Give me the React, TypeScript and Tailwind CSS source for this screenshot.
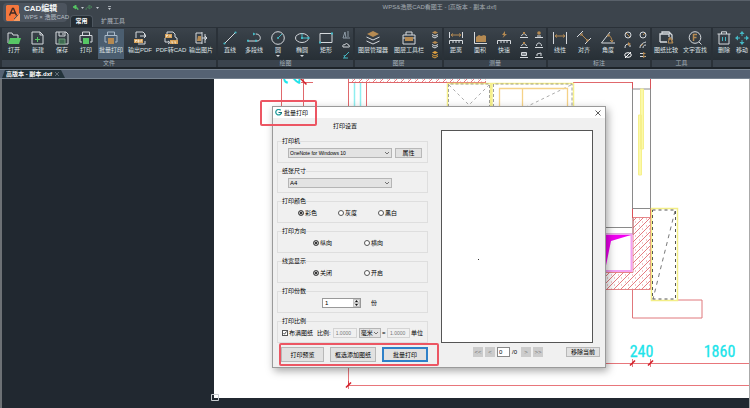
import { useState } from "react";
import type { ReactNode } from "react";
import clsx from "clsx";

const FONT = "font-['Liberation_Sans','Noto_Sans_CJK_SC',sans-serif]";

/* ---------- ribbon icons ---------- */

const W = "#d5d9dd";
const G = "#57c765";
const O = "#b58a52";
const C = "#45b8c4";

const ICONS: Record<string, ReactNode> = {
  open: (
    <>
      <path d="M2 12V2h4l1 2h5v3" stroke={W} />
      <path d="M4 7h11l-2 6H2z" fill={G} />
    </>
  ),
  create: (
    <>
      <path d="M2 1h8l3 3v9H2zM10 1v3h3" stroke={W} />
      <path d="M7.5 6v5M5 8.5h5" stroke={G} />
    </>
  ),
  save: (
    <>
      <path d="M2 1h10l2 2v10H2zM5 1v4h6V1M9 2v2" stroke={W} />
      <path d="M5 8h6v5H5z" fill="#3e6b51" stroke="#6f9a7c" />
    </>
  ),
  print: (
    <>
      <path d="M4.5 4V1h7v3M4 11H2V4.5h12V11h-2" stroke={W} />
      <path d="M5 7h6v6H5z" fill={G} />
    </>
  ),
  batch: (
    <>
      <path d="M4.5 4V1h7v3M4 11H2V4.5h12V11h-2" stroke="#a9b9c8" />
      <path d="M5 7h6v6H5z" fill={O} />
    </>
  ),
  pdf: (
    <>
      <path d="M4 7V1h7l2 2v3M13 10v3H6M8 5h6M12 3l2 2-2 2" stroke={W} />
      <rect x="2" y="8" width="9" height="4" fill="#d8a35a" />
      <path d="M3.5 11V9h1v1M6 9v2h1V9zM9 11V9h1" stroke="#fff" strokeWidth=".6" />
    </>
  ),
  pdfcad: (
    <>
      <path d="M4 3V1h6l2 2v3M2 7v4h4M5 10l2 1.5L5 13M12 6l2 1v3" stroke={W} />
      <rect x="2" y="3" width="7" height="4" fill="#d8a35a" />
      <rect x="7" y="9" width="8" height="4" fill="#d8a35a" />
      <path d="M3.5 6V4h1v1M7 4v2M9 10v2h1M12 10v2h1" stroke="#fff" strokeWidth=".6" />
    </>
  ),
  image: (
    <>
      <path d="M9 2H3v10h6M9 1v12M12 3v9M9 7h5M12 5l2 2-2 2" stroke={W} />
      <path d="M5 5h3v5H4z" fill={O} />
    </>
  ),
  line: (
    <>
      <path d="M3 12 13 2" stroke={W} />
      <circle cx="2.5" cy="12.5" r="1.1" fill={C} />
      <circle cx="13.5" cy="1.5" r="1.1" fill={C} />
    </>
  ),
  polyline: (
    <>
      <path d="M2 10h9c5 0 4-7-1-7" stroke={W} />
      <path d="M7 1.5v3L10 3zM1 8.8h2v2H1zM9 8.8h2v2H9z" fill={C} />
    </>
  ),
  circle: (
    <>
      <circle cx="8" cy="7" r="6.3" stroke={W} />
      <path d="m8 7 4-4" stroke={C} />
      <circle cx="8" cy="7" r="1" fill={C} />
    </>
  ),
  ellipse: (
    <>
      <ellipse cx="8" cy="7" rx="6.5" ry="4.5" stroke={W} />
      <path d="M8 2.5V7h6" stroke={C} />
      <path d="M7 6h2v2H7zM13.5 6h2v2h-2z" fill={C} />
    </>
  ),
  rect: (
    <>
      <path d="M2 2.5h12v9H2z" stroke={W} />
      <path d="M1 10.5h2v2H1zM13 1.5h2v2h-2z" fill={C} />
    </>
  ),
  layers: (
    <>
      <path d="M8 0l6 3-6 3-6-3z" fill={O} />
      <path d="m1.5 6 6.5 3 6.5-3M1.5 10 8 13l6.5-3" stroke={W} />
    </>
  ),
  toolbox: (
    <>
      <path d="M5 4V1h6v3M2 4h12v9H2zM2 7h2m8 0h2" stroke={W} />
      <path d="M4 6h8v4H4z" fill={O} />
    </>
  ),
  distance: (
    <>
      <path d="M1.5 1v6M14.5 1v6M1.5 13V9.5h13V13M5 10v2M8 10v2M11 10v2" stroke={W} />
      <path d="M3 4h10M5 2.5 3 4l2 1.5M11 2.5 13 4l-2 1.5" stroke={O} />
    </>
  ),
  area: (
    <>
      <path d="M2.5 1v11.5H15" stroke={W} />
      <path d="M4 11V6l3-2 2 1 3-1 2 1v6z" fill={O} />
    </>
  ),
  quick: (
    <>
      <path d="M1.5 13V9.5h13V13M5 10v2M8 10v2M11 10v2" stroke={W} />
      <path d="M9 0 6 4h2L6.5 7 11 3H9z" fill={O} />
    </>
  ),
  linear: (
    <>
      <path d="M1.5 1v12M14.5 1v12" stroke={W} />
      <path d="M3 5h10M5 3.5 3 5l2 1.5M11 3.5 13 5l-2 1.5" stroke={O} />
    </>
  ),
  aligned: (
    <>
      <path d="M1 6 7 0M9 13l6-6" stroke={W} />
      <path d="m5 3 7 7M5 5V3h2M10 10h2V8" stroke={O} />
    </>
  ),
  angle: (
    <>
      <path d="M15 12H1.5L10 1" stroke={W} />
      <path d="M8 4c3 1 4 4 4 7M10 4H8v2M10 9l2 2 1-2" stroke={O} />
    </>
  ),
  compare: (
    <>
      <path d="M2 11V3h9v3M4 3V1h7l3 3v5M2 11h7" stroke={W} strokeWidth="1.3" />
      <path d="M12 6l3 6h-5zM10 8h4v4" stroke={O} />
    </>
  ),
  find: (
    <>
      <circle cx="8" cy="6.5" r="5.8" stroke={W} />
      <path d="m12 11 2.5 2.5" stroke={W} />
      <path d="M6.5 10V3.5h3.5M6.5 6.5h3" stroke={O} strokeWidth="1.5" />
    </>
  ),
  trash: (
    <>
      <path d="M1.5 3h13M5.5 3V.8h5V3M3 3v10h10V3" stroke={W} />
      <path d="M6.5 6v4M9.5 6v4" stroke={C} />
    </>
  ),
  move: (
    <>
      <path d="M8 2v3M8 9v3M3 7h3M10 7h3" stroke={C} />
      <path d="M8 0l2.5 3h-5zM8 14l2.5-3h-5zM1 7l3-2.5v5zM15 7l-3-2.5v5z" fill={C} />
    </>
  ),
  /* small ones, 8x8 */
  sText: <path d="M1 7 3 1l1 6M5 1h2M5 3h2M5 5h2M1 7h7" stroke="#8d9aa5" />,
  sCloud: <path d="M1 6c-1-2 1-3 2-2 0-2 3-2 3 0 2 0 2 2 1 2z" stroke={W} />,
  sPick: <path d="M7 1 3 5M1 7h5M2 4l1 3" stroke={C} />,
  sLayer: (
    <>
      <path d="M4 0l3 1.5L4 3 1 1.5z" fill={O} />
      <path d="m1 3.5 3 1.5 3-1.5M1 5.5 4 7l3-2" stroke={W} />
    </>
  ),
  sLayerOn: (
    <>
      <path d="M4 0l3 1.5L4 3 1 1.5z" fill="#e0a13f" />
      <path d="m1 3.5 3 1.5 3-1.5M1 5.5 4 7l3-2" stroke="#e0a13f" />
    </>
  ),
  sArc: (
    <>
      <path d="M0 6.5h8M1.5 5c1-3 4-3 5 0" stroke={W} />
      <path d="M3 1h2v2H3z" fill={O} />
    </>
  ),
  sStamp: (
    <>
      <path d="M0 6.5h8M2 5h4" stroke={W} />
      <circle cx="4" cy="2" r="1.8" fill={O} />
    </>
  ),
  sTable: <path d="M1.5 1.5h5v3h-5zM0 6.5h8M2 3h4" stroke={W} />,
  sCurve: <path d="M0 6.5h8M1.5 5c0-4 5-4 5 0" stroke={W} />,
  sBox: <path d="M0 6.5h8M2 5V3l4-1v3" stroke={W} />,
  sDiameter: (
    <>
      <circle cx="4" cy="4" r="3" stroke={W} />
      <path d="m2 2 4 4" stroke={O} />
    </>
  ),
  sRadius: (
    <>
      <circle cx="4" cy="4" r="3" stroke={W} />
      <path d="m4 4 2-2" stroke={O} />
    </>
  ),
  sLeader: (
    <>
      <path d="M1 7c0-3 1-4 4-4M5 5h2" stroke={W} />
      <path d="M4 1l3 2-3 2z" fill={O} />
    </>
  ),
  sArcLen: (
    <>
      <path d="M1 7c0-3 2-5 6-6M4 7c0-2 1-3 3-3" stroke={W} />
      <path d="m2 5 2-2" stroke={O} />
    </>
  ),
  sSlash: (
    <>
      <ellipse cx="4" cy="4" rx="3.3" ry="2.3" stroke="#fff" />
      <path d="M1 7 7 1" stroke="#fff" />
    </>
  ),
  sSwap: (
    <>
      <path d="M1 2.5h4M1 5.5h6" stroke={W} />
      <path d="M4 1l3 1.5L4 4zM4 4l3 1.5L4 7z" fill={O} />
    </>
  ),
};

function Icon({ name }: { name: string }) {
  return (
    <svg viewBox="0 0 16 14" className="h-[14px] w-4 shrink-0" fill="none">
      {ICONS[name]}
    </svg>
  );
}

interface Tool {
  icon: string;
  label: string;
  width: string;
  active?: boolean;
  menu?: boolean;
}

interface Group {
  title: string;
  width: string;
  tools: Tool[];
  small?: string[][];
}

const GROUPS: Group[] = [
  {
    title: "文件",
    width: "w-[214px]",
    tools: [
      { icon: "open", label: "打开", width: "w-6" },
      { icon: "create", label: "新建", width: "w-6" },
      { icon: "save", label: "保存", width: "w-6" },
      { icon: "print", label: "打印", width: "w-6" },
      { icon: "batch", label: "批量打印", width: "w-[26px]", active: true },
      { icon: "pdf", label: "输出PDF", width: "w-8" },
      { icon: "pdfcad", label: "PDF转CAD", width: "w-[30px]" },
      { icon: "image", label: "输出图片", width: "w-[30px]" },
    ],
  },
  {
    title: "绘图",
    width: "w-[135px]",
    tools: [
      { icon: "line", label: "直线", width: "w-6" },
      { icon: "polyline", label: "多段线", width: "w-6" },
      { icon: "circle", label: "圆", width: "w-6", menu: true },
      { icon: "ellipse", label: "椭圆", width: "w-6", menu: true },
      { icon: "rect", label: "矩形", width: "w-6" },
    ],
    small: [["sText", "sCloud", "sPick"]],
  },
  {
    title: "图层",
    width: "w-[87px]",
    tools: [
      { icon: "layers", label: "图层管理器", width: "w-9" },
      { icon: "toolbox", label: "图层工具栏", width: "w-9" },
    ],
    small: [["sLayer", "sLayer", "sLayerOn"]],
  },
  {
    title: "测量",
    width: "w-[102px]",
    tools: [
      { icon: "distance", label: "距离", width: "w-6" },
      { icon: "area", label: "面积", width: "w-6" },
      { icon: "quick", label: "快速", width: "w-6" },
    ],
    small: [
      ["sArc", "sArc", "sTable"],
      ["sStamp", "sCurve", "sBox"],
    ],
  },
  {
    title: "标注",
    width: "w-[102px]",
    tools: [
      { icon: "linear", label: "线性", width: "w-6" },
      { icon: "aligned", label: "对齐", width: "w-6" },
      { icon: "angle", label: "角度", width: "w-6" },
    ],
    small: [
      ["sDiameter", "sLeader", "sSlash"],
      ["sRadius", "sArcLen", "sSwap"],
    ],
  },
  {
    title: "工具",
    width: "w-[59px]",
    tools: [
      { icon: "compare", label: "图纸比较", width: "w-7" },
      { icon: "find", label: "文字查找", width: "w-[30px]" },
    ],
  },
  {
    title: "",
    width: "min-w-[37px] flex-1",
    tools: [
      { icon: "trash", label: "删除", width: "w-[22px]" },
      { icon: "move", label: "移动", width: "w-[14px]" },
    ],
  },
];

function RibbonGroup({ title, width, tools, small = [] }: Group) {
  return (
    <section className={clsx("flex shrink-0 flex-col overflow-hidden bg-linear-to-b from-[#3b434b] to-[#232b31]", width)}>
      <div className="flex h-8 pt-px">
        {tools.map((tool) => (
          <button
            key={tool.label}
            type="button"
            className={clsx(
              "flex h-[30px] shrink-0 flex-col items-center whitespace-nowrap pt-[2px] text-[6px] leading-[8px] text-[#dfe3e6]",
              tool.width,
              tool.active && "bg-[#4b5e70]"
            )}
          >
            <Icon name={tool.icon} />
            <span className="pt-px">{tool.label}</span>
            {tool.menu && (
              <svg viewBox="0 0 4 2" className="mt-px h-[2px] w-1 shrink-0">
                <path d="M0 0h4L2 2z" fill={W} />
              </svg>
            )}
          </button>
        ))}
        {small.map((column, i) => (
          <div key={i} className="flex flex-1 flex-col items-center gap-[2px] pt-[2px]">
            {column.map((name, j) => (
              <button key={j} type="button" aria-label={name} className="size-2">
                <svg viewBox="0 0 8 8" className="size-2" fill="none">
                  {ICONS[name]}
                </svg>
              </button>
            ))}
          </div>
        ))}
      </div>
      <div className="h-[7px] bg-[#3a434d] text-center text-[6px] leading-[7px] text-[#a9b3bc]">{title}</div>
    </section>
  );
}

function Header() {
  return (
    <header className="flex h-[27px] border-t border-[#59616a] pl-[3px]">
      <div className="mt-[2px] flex h-[19px] w-16 shrink-0 items-center gap-1 rounded-sm bg-[#4c545e] pl-[3px]">
        <svg viewBox="0 0 14 16" className="h-4 w-[14px] shrink-0" fill="none">
          <path d="M1 0h11l1 1v8l-6 7H1l-1-1V1z" fill="#f4773d" />
          <path d="M14 8v8H7z" fill="#fa9c62" />
          <path d="m3.5 10.5 3-7h1l3 7M4.8 8h4.4" stroke="#3f2a25" strokeWidth="1.4" />
          <path d="m8 14 4-4" stroke="#4c545e" />
        </svg>
        <div className="whitespace-nowrap text-[#f2f4f6]">
          <div className="text-[8px] font-bold leading-[9px]">CAD编辑</div>
          <div className="text-[6px] leading-[8px] text-[#b8bfc7]">WPS × 浩辰CAD</div>
        </div>
      </div>

      <div className="flex shrink-0 flex-col justify-between pl-[3px]">
        <svg viewBox="0 0 42 6" className="ml-[3px] mt-1 h-[6px] w-[42px]" fill="none">
          <path d="M5 5c0-3-2-3-3-3M3 0 0 2l3 2z" stroke={G} strokeWidth=".8" fill={G} />
          <path d="M13 5c0-3 2-3 4-3M16 0l3 2-3 2z" stroke="#4a8a5b" strokeWidth=".8" />
          <path d="M8 2h3L9.5 4zM23 2h3l-1.5 2zM35 3h3l-1.5 2zM35 1h3v.8h-3z" fill="#c3c9cf" />
        </svg>
        <nav className="flex text-[6px] leading-[11px] text-[#b4bbc2]">
          <a href="#home" className="w-[23px] rounded-t-sm border border-b-0 border-[#4d565f] bg-[#242c33] text-center font-bold text-white">
            常用
          </a>
          <a href="#tools" className="px-2 pt-px">
            扩展工具
          </a>
        </nav>
      </div>

      <h1 className="flex-1 pr-1 pt-[2px] text-center text-[6px] leading-[9px] text-[#a5acb3]">
        WPS&浩辰CAD看图王 - [高版本 - 副本.dxf]
      </h1>
    </header>
  );
}

/* ---------- drawing on the sheet ---------- */

function Tick({ x, y }: { x: number; y: number }) {
  return (
    <g stroke="#d3202a">
      <path d={`M${x} ${y - 4}v8`} strokeWidth=".6" />
      <path d={`M${x - 2.5} ${y + 2.5}l5-5`} strokeWidth="1.6" />
    </g>
  );
}

function Drawing() {
  return (
    <svg viewBox="214 79 535 319" preserveAspectRatio="xMinYMin slice" className="block h-[319px] w-full bg-white" fill="none">
      <defs>
        <pattern id="hatch" width="7" height="7" patternUnits="userSpaceOnUse">
          <path d="M-1 8 8-1M-1 1l2-2M6 8l2-2" stroke="#d9434b" strokeWidth=".7" />
          <path d="M2 2h1M5 5h1" stroke="#d9434b" strokeWidth=".6" />
        </pattern>
      </defs>

      {/* top left dimension */}
      <path d="M281.500 79v28M303.500 79v28M301 82.500h12" stroke="#e0686c" />
      <path d="m300.500 78.500 6 6" stroke="#d3202a" strokeWidth="1.5" />
      <text transform="translate(300 85) rotate(-90)" fontSize="24" fill="#20e4ea">
        2
      </text>

      {/* wall along the top */}
      <rect x="348" y="79" width="138" height="3" fill="url(#hatch)" />
      <path d="M348 82.500h138M348.500 79v28M366.500 82v25M573 82.500h60" stroke="#e0686c" />
      <path d="M354.500 83v24M360.500 83v24" stroke="#8eeef0" strokeWidth="1.5" />

      {/* cabinets */}
      <path d="M447.500 107V83.500h43V107M492 107V83.500h81.500V107" stroke="#f6f08c" strokeWidth="1.5" />
      <path d="M448.500 107V84h41v23M493.500 107V84H572v23" stroke="#777" strokeWidth=".7" strokeDasharray="3 2" />
      <path d="m449 85 20 20 20-20M571 85l-45 22" stroke="#888" strokeWidth=".7" strokeDasharray="3 3" />
      <path d="M499.500 107V88.500h68V107M522.500 88v19" stroke="#f5d287" strokeWidth="1.3" />

      {/* right hand window */}
      <path d="M632.500 82v8M650.500 79v10M632.500 208v10M650.500 208v10" stroke="#d9535a" />
      <path d="M632.500 89v119.500h18V89zM605 227.500h27M605 234h28v-16" stroke="#8a8a8a" />
      <path d="M640.500 89h3v60h-3zM638.500 115h3v60h-3z" fill="#fbf9a8" stroke="#f6f08c" />

      {/* hatched corner */}
      <path d="M633 217.500h17.500v72H605v-17h28z" fill="url(#hatch)" stroke="#e0686c" strokeWidth=".8" />
      <path d="M605 234.500h26.500V271H605" stroke="#f3a0f3" strokeWidth="2" />
      <path d="M605 235h26l-20 6-5.500 27H605z" fill="#f000f0" />
      <path d="M632.500 290v28h69.500v-18h-25" stroke="#e0787c" />

      <path d="M651.500 208.500h26v92h-26z" stroke="#f3ee86" strokeWidth="1.5" />
      <path d="M652.500 210h23v89h-23z" stroke="#555" strokeDasharray="3 3" />
      <path d="m675 211-22 88" stroke="#555" strokeDasharray="4 4" strokeWidth=".8" />

      {/* dimensions */}
      <path d="M600 363.500h150M348 385.500h402M348.500 366v20" stroke="#e8767b" />
      <Tick x={632.5} y={363} />
      <Tick x={650.5} y={363} />
      <Tick x={348.5} y={385} />
      <g
        className="font-['Roboto_Condensed','Open_Sans_Condensed','Liberation_Sans_Narrow','Liberation_Sans',sans-serif]"
        fontSize="16"
        fill="#20e4ea"
        stroke="#20e4ea"
        strokeWidth=".3"
      >
        <text x="641.5" y="357" textAnchor="middle">
          240
        </text>
        <text x="719.5" y="357" textAnchor="middle">
          1860
        </text>
      </g>
    </svg>
  );
}

/* ---------- print dialog ---------- */

const BUTTON = "border border-[#b8b8b8] bg-[#e1e1e1] text-center text-black";

function Chevron() {
  return (
    <svg viewBox="0 0 6 4" className="pointer-events-none absolute right-[2px] top-[3px] h-1 w-[6px]" fill="none">
      <path d="m1 1 2 2 2-2" stroke="#555" strokeWidth=".8" />
    </svg>
  );
}

function Select({ label, value, className }: { label: string; value: string; className: string }) {
  return (
    <div className={clsx("relative", className)}>
      <select
        aria-label={label}
        className="block h-[10px] w-full appearance-none border border-[#b5b5b5] bg-[#e3e3e3] pl-px leading-[8px] text-black"
      >
        <option>{value}</option>
      </select>
      <Chevron />
    </div>
  );
}

function Section({ title, children }: { title: string; children: ReactNode }) {
  return (
    <fieldset className="mb-1 border border-[#dedede] px-1 pb-1">
      <legend className="h-2 leading-[8px]">{title}</legend>
      <div className="flex h-[13px] items-center pt-[3px]">{children}</div>
    </fieldset>
  );
}

function RadioRow({ name, options, className }: { name: string; options: string[]; className: string }) {
  const [value, setValue] = useState(options[0]);

  return (
    <div className={clsx("flex", className)}>
      {options.map((option) => (
        <label key={option} className="flex items-center gap-px">
          <input
            type="radio"
            name={name}
            checked={value === option}
            onChange={() => setValue(option)}
            className="size-[6px] appearance-none rounded-full border border-[#555] bg-white checked:bg-black checked:shadow-[inset_0_0_0_1px_#ddd]"
          />
          {option}
        </label>
      ))}
    </div>
  );
}

function PageButton({ label }: { label: string }) {
  return (
    <button type="button" disabled className="h-[10px] w-[10px] shrink-0 bg-[#cccccc] text-center text-[#777]">
      {label}
    </button>
  );
}

function PrintDialog() {
  const [copies, setCopies] = useState(1);
  const [fit, setFit] = useState(true);

  return (
    <div
      role="dialog"
      aria-label="批量打印"
      className="absolute left-[270px] top-[27px] w-[334px] border border-[#9a9a9a] bg-[#f0f0f0] text-[6px] leading-[8px] text-black shadow-[2px_3px_8px_rgba(0,0,0,0.35)]"
    >
      <div className="flex h-[11px] items-center gap-[2px] bg-white px-1 pl-[2px]">
        <svg viewBox="0 0 8 8" className="size-[7px]" fill="none">
          <path d="M6.500 1.500A3.200 3.200 0 1 0 7 5" stroke="#1e9b9b" strokeWidth="1.4" />
          <path d="M4 4h3.500v1.500" stroke="#176d79" strokeWidth="1.2" />
        </svg>
        <span className="flex-1">批量打印</span>
        <button type="button" aria-label="关闭窗口">
          <svg viewBox="0 0 6 6" className="size-[6px]" fill="none">
            <path d="m.5.5 5 5m0-5-5 5" stroke="#333" strokeWidth=".8" />
          </svg>
        </button>
      </div>

      <div className="flex justify-between pb-[5px] pl-1 pr-3 pt-1">
        <div className="w-[151px]">
          <h2 className="mb-[7px] pl-14">打印设置</h2>

          <Section title="打印机">
            <div className="flex items-center gap-[3px] pl-[6px]">
              <Select label="打印机" value="OneNote for Windows 10" className="w-[104px] text-[5px]" />
              <button type="button" className={clsx(BUTTON, "h-[10px] w-[27px]")}>
                属性
              </button>
            </div>
          </Section>
          <Section title="纸张尺寸">
            <Select label="纸张尺寸" value="A4" className="ml-[6px] w-[104px]" />
          </Section>
          <Section title="打印颜色">
            <RadioRow name="color" options={["彩色", "灰度", "黑白"]} className="gap-[21px] pl-4" />
          </Section>
          <Section title="打印方向">
            <RadioRow name="direction" options={["纵向", "横向"]} className="gap-8 pl-[31px]" />
          </Section>
          <Section title="线宽显示">
            <RadioRow name="weight" options={["关闭", "开启"]} className="gap-8 pl-[31px]" />
          </Section>
          <Section title="打印份数">
            <div className="ml-10 flex h-[10px] w-[39px] border border-[#999] bg-white">
              <input
                aria-label="打印份数"
                value={copies}
                onChange={(e) => setCopies(Number(e.target.value) || 1)}
                className="w-0 flex-1 pl-[2px]"
              />
              <div className="flex w-[7px] flex-col bg-[#e8e8e8]">
                <button type="button" aria-label="增加" onClick={() => setCopies(copies + 1)} className="h-1 border border-[#c4c4c4]">
                  <svg viewBox="0 0 5 2" className="h-[2px] w-[5px]">
                    <path d="M1 2h3L2.500 0z" fill="#111" />
                  </svg>
                </button>
                <button type="button" aria-label="减少" onClick={() => setCopies(Math.max(1, copies - 1))} className="h-1 border border-[#c4c4c4]">
                  <svg viewBox="0 0 5 2" className="h-[2px] w-[5px]">
                    <path d="M1 0h3L2.500 2z" fill="#111" />
                  </svg>
                </button>
              </div>
            </div>
            <span className="pl-[10px]">份</span>
          </Section>
          <Section title="打印比例">
            <label className="flex shrink-0 items-center gap-px">
              <span className="relative flex">
                <input
                  type="checkbox"
                  checked={fit}
                  onChange={() => setFit(!fit)}
                  className="size-[6px] appearance-none border border-[#555] bg-white"
                />
                {fit && (
                  <svg viewBox="0 0 6 6" className="pointer-events-none absolute inset-0 size-[6px]" fill="none">
                    <path d="m1.500 3 1 1.200 2-2.700" stroke="#222" strokeWidth=".8" />
                  </svg>
                )}
              </span>
              布满图纸
            </label>
            <label htmlFor="scale" className="shrink-0 pl-1">
              比例:
            </label>
            <input
              id="scale"
              defaultValue="1.0000"
              disabled
              className="ml-[2px] h-[10px] w-6 border border-[#d4d4d4] pl-[2px] text-[5px] text-[#777]"
            />
            <Select label="单位" value="毫米" className="ml-[2px] w-6" />
            <span className="w-[7px] text-center">=</span>
            <input
              aria-label="图纸单位"
              defaultValue="1.0000"
              disabled
              className="h-[10px] w-[23px] border border-[#d4d4d4] pl-[2px] text-[5px] text-[#777]"
            />
            <span className="shrink-0 pl-px">单位</span>
          </Section>

          <div className="relative mt-1 flex justify-between pl-1">
            <button type="button" className={clsx(BUTTON, "h-[15px] w-[43px]")}>
              打印预览
            </button>
            <button type="button" className={clsx(BUTTON, "h-[15px] w-[46px]")}>
              框选添加图纸
            </button>
            <button type="button" className="h-[15px] w-[46px] border-2 border-[#2f80c8] bg-[#e1e1e1]">
              批量打印
            </button>
            <div className="pointer-events-none absolute -inset-y-1 -right-[11px] left-[2px] rounded-[2px] border-2 border-[#ec5663]" />
          </div>
        </div>

        <div className="flex w-[152px] flex-col pt-2">
          <div className="relative flex-1 border border-[#555] bg-white">
            <div className="absolute left-9 top-32 size-px bg-[#333]" />
          </div>
          <div className="mb-[5px] mt-1 flex h-[10px] items-center gap-[2px] pl-8">
            <PageButton label="<<" />
            <PageButton label="<" />
            <input aria-label="页码" defaultValue="0" className="h-[10px] w-[13px] border border-[#888] bg-white pl-px" />
            <span className="w-[7px]">/0</span>
            <PageButton label=">" />
            <PageButton label=">>" />
            <button type="button" className={clsx(BUTTON, "-mr-[7px] ml-auto h-[10px] w-[34px] shrink-0")}>
              移除当前
            </button>
          </div>
        </div>
      </div>

      <div className="pointer-events-none absolute -left-[13px] -top-[7px] h-[26px] w-[57px] rounded-[2px] border-2 border-[#ec5663]" />
    </div>
  );
}

export default function App() {
  return (
    <div className={clsx("flex min-h-screen flex-col overflow-hidden bg-[#3c444c]", FONT)}>
      <Header />

      <div className="flex gap-[2px] overflow-hidden border-b-2 border-[#1d2329] bg-[#2a3138] pl-[2px] pt-px">
        {GROUPS.map((group) => (
          <RibbonGroup key={group.title} {...group} />
        ))}
      </div>

      <div className="flex h-[10px] border-y border-[#76828f] bg-[#556273] pl-[2px]">
        <div className="flex w-[63px] items-center justify-between bg-[#23333b] pl-1 pr-[2px] text-[6px] font-bold leading-[8px] text-white [clip-path:polygon(3px_0,59px_0,100%_100%,0_100%)]">
          <span className="whitespace-nowrap">高版本 - 副本.dxf</span>
          <button type="button" aria-label="关闭标签" className="pr-1">
            <svg viewBox="0 0 4 4" className="size-1" fill="none">
              <path d="m0 0 4 4m0-4-4 4" stroke="#8d99a3" strokeWidth=".6" />
            </svg>
          </button>
        </div>
      </div>

      <main className="relative flex-1 border-l-2 border-r border-l-[#6d7175] border-r-[#aaa] bg-[#212830] pl-[212px]">
        <Drawing />
        <svg viewBox="0 0 8 8" className="absolute left-[209px] top-[315px] size-2" fill="none">
          <path d="M.5.5h7v6h-7z" stroke="#c8ccd0" />
        </svg>
        <PrintDialog />
      </main>
    </div>
  );
}
